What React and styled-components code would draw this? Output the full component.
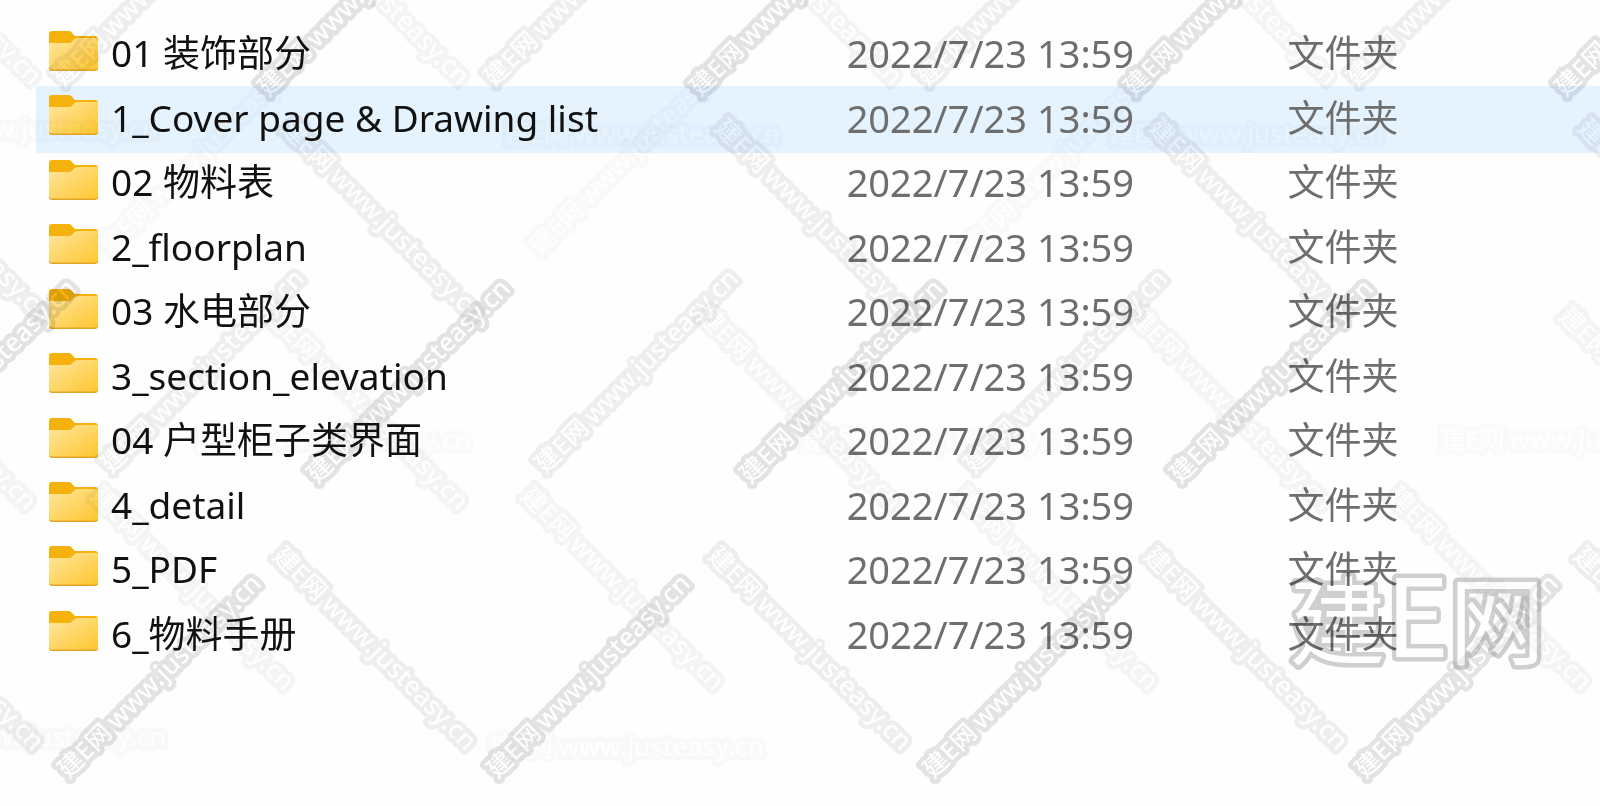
import React from "react";
import styled, { createGlobalStyle, css } from "styled-components";

const Colors = {
  TEXT: "#111111",
  META: "#6e6e6e",
  HOVER: "#e5f3ff",
  WHITE: "#fefefe"
};

const latin = `"Noto Sans", "Open Sans"`;
const cjk = `"Noto Sans CJK SC", sans-serif`;

const fileList = [
  { id: 1, name: "01 装饰部分" },
  { id: 2, name: "1_Cover page & Drawing list", isHover: true },
  { id: 3, name: "02 物料表" },
  { id: 4, name: "2_floorplan" },
  { id: 5, name: "03 水电部分" },
  { id: 6, name: "3_section_elevation" },
  { id: 7, name: "04 户型柜子类界面" },
  { id: 8, name: "4_detail" },
  { id: 9, name: "5_PDF" },
  { id: 10, name: "6_物料手册" }
];

// every group repeats the same stamp along one line: y, angle, strength, x positions
const stampGroups = [
  { y: 129, angle: 0, strength: 0.05, xs: [-104] },
  { y: 134, angle: 0, strength: 0.05, xs: [518, 1122] },
  { y: 440, angle: 0, strength: 0.04, xs: [209, 813, 1453] },
  { y: 737, angle: 0, strength: 0.05, xs: [-96] },
  { y: 747, angle: 0, strength: 0.05, xs: [502] },
  { y: 241, angle: -45, strength: 0.05, xs: [113, 543, 976] },
  { y: -105, angle: 45, strength: 0.1, xs: [-148, 280, 713, 1148] },
  { y: 320, angle: 45, strength: 0.1, xs: [-153, 279, 712, 1143, 1573] },
  { y: 500, angle: 45, strength: 0.1, xs: [105, 535, 969, 1402] },
  { y: 132, angle: 45, strength: 0.16, xs: [-138, 295, 729, 1163, 1592] },
  { y: 560, angle: 45, strength: 0.16, xs: [-146, 287, 722, 1158, 1588] },
  { y: 72, angle: -45, strength: 0.16, xs: [66, 497, 930, 1360] },
  { y: 459, angle: -45, strength: 0.16, xs: [114, 548, 977] },
  { y: 82, angle: -45, strength: 0.27, xs: [271, 703, 1137, 1568] },
  { y: 469, angle: -45, strength: 0.27, xs: [-114, 320, 753, 1183] },
  { y: 764, angle: -45, strength: 0.27, xs: [71, 500, 936, 1368] }
];

const GlobalStyle = createGlobalStyle`
  body {
    margin: 0;
    background-color: ${Colors.WHITE};
  }
`;

const Styled = {
  Page: styled.main`
    position: relative;
    overflow: hidden;
    box-sizing: border-box;
    min-height: 100vh;
    padding: 23px 0 0 37px;
    background-color: ${Colors.WHITE};
    font-family: ${latin}, ${cjk};
  `,

  FileTable: styled.table`
    table-layout: fixed;
    width: 100%;
    height: 80vh;
    border-collapse: collapse;
  `,

  Column: styled.col`
    width: ${({ $width }) => $width};
  `,

  Row: styled.tr`
    ${({ $isHover }) => {
      return (
        $isHover &&
        css`
          background-color: ${Colors.HOVER};
          box-shadow: 0 0 0 1px ${Colors.HOVER};
        `
      );
    }}
  `,

  Cell: styled.td`
    padding: 0 0 4px;
    color: ${Colors.META};
    font-size: ${({ $size }) => $size || 37}px;
    line-height: 48px;
    white-space: nowrap;
  `,

  FileName: styled.div`
    display: flex;
    align-items: center;
    gap: 12px;
    padding-left: 12px;
    color: ${Colors.TEXT};
  `,

  FolderIcon: styled.svg`
    flex: none;
    width: 50px;
    height: 42px;
    margin-bottom: 5px;
  `,

  Overlay: styled.svg`
    position: absolute;
    inset: 0;
    width: 100%;
    height: 100%;
    mix-blend-mode: multiply;
    pointer-events: none;
    user-select: none;
  `,

  Stamp: styled.text`
    opacity: ${({ $strength }) => $strength};
    fill: #ffffff;
    stroke: #9c9c9c;
    stroke-width: 9px;
    stroke-linejoin: round;
    paint-order: stroke fill;
    font-size: 25px;
    font-weight: 500;

    .site {
      font-size: 26px;
    }
  `,

  Logo: styled.text`
    opacity: 0.4;
    fill: #ffffff;
    stroke: #8a8a8a;
    stroke-width: 9px;
    stroke-linejoin: round;
    paint-order: stroke fill;
    text-anchor: end;
    font-family: ${cjk};
    font-size: 96px;

    .letter {
      font-size: 108px;
    }
  `
};

function FolderIcon() {
  return (
    <Styled.FolderIcon viewBox="0 0 50 42" aria-hidden="true">
      <defs>
        <linearGradient id="folderFront" x1="0" y1="0" x2="1" y2="1">
          <stop offset="0" stopColor="#ffe79f" />
          <stop offset="1" stopColor="#ffc62f" />
        </linearGradient>
      </defs>
      <path
        d="M3 1h16c2 0 3 .6 4 2l3 3h20c2 0 3 1 3 3v10H0V4c0-2 1-3 3-3z"
        fill="#f5b10c"
      />
      <path
        d="M0 13h19c2 0 3-.4 4-1.500l2-2c1-1 2-1.500 3-1.500h21v30c0 2-1 3-3 3H3c-2 0-3-1-3-3z"
        fill="#e3a529"
      />
      <path
        d="M0 13h19c2 0 3-.4 4-1.500l2-2c1-1 2-1.500 3-1.500h21v28.500c0 2-1 3-3 3H3c-2 0-3-1-3-3z"
        fill="url(#folderFront)"
      />
    </Styled.FolderIcon>
  );
}

function FileRow({ file }) {
  return (
    <Styled.Row $isHover={file.isHover}>
      <Styled.Cell>
        <Styled.FileName>
          <FolderIcon />
          <span>{file.name}</span>
        </Styled.FileName>
      </Styled.Cell>
      <Styled.Cell $size={38}>2022/7/23 13:59</Styled.Cell>
      <Styled.Cell>文件夹</Styled.Cell>
    </Styled.Row>
  );
}

function Watermark() {
  return (
    <Styled.Overlay>
      {stampGroups.map(({ y, angle, strength, xs }) => {
        return xs.map(x => {
          return (
            <Styled.Stamp
              key={`${x}:${y}`}
              x={-13}
              y={9}
              transform={`translate(${x} ${y}) rotate(${angle})`}
              $strength={strength}
            >
              建E网
              <tspan className="site" dx={5}>
                www.justeasy.cn
              </tspan>
            </Styled.Stamp>
          );
        });
      })}
      <Styled.Logo x="100%" y="100%" dx={-55} dy={-149}>
        建<tspan className="letter">E</tspan>网
      </Styled.Logo>
    </Styled.Overlay>
  );
}

function App() {
  return (
    <Styled.Page lang="zh-CN">
      <GlobalStyle />
      <Styled.FileTable>
        <colgroup>
          <Styled.Column $width="51.8%" />
          <Styled.Column $width="28.2%" />
          <Styled.Column $width="20%" />
        </colgroup>
        <tbody>
          {fileList.map(file => {
            return <FileRow key={file.id} file={file} />;
          })}
        </tbody>
      </Styled.FileTable>
      <Watermark />
    </Styled.Page>
  );
}

export default App;
